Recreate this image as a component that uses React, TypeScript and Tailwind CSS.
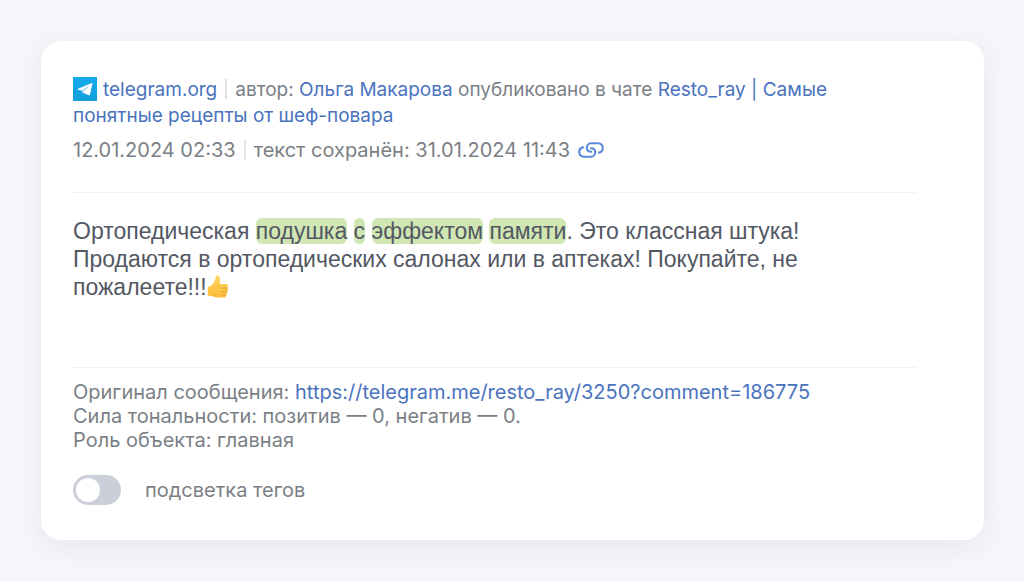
import { useState } from "react";
import type { ReactNode } from "react";

const POST_URL = "https://telegram.me/resto_ray/3250?comment=186775";

function TelegramIcon() {
  return (
    <svg viewBox="0 0 24 24" className="mr-1.5 inline-block size-6 align-[-5px]" aria-hidden="true">
      <defs>
        <linearGradient id="telegram-bg" x1="0" y1="0" x2="0" y2="1">
          <stop offset="0" stopColor="#14aae9" />
          <stop offset="1" stopColor="#149fdd" />
        </linearGradient>
      </defs>
      <rect width="24" height="24" fill="url(#telegram-bg)" />
      <path d="M18.7 6 5.1 11.7c-.6.3-.6.8 0 1l3.7.9L16 8.9 11 14l-.3 2 4.9 2.2c.7.3 1.2.1 1.4-.6L19.4 6.8c.1-.7-.2-1-.7-.8Z" fill="#fff" />
      <path d="M8.8 13.6 16 8.9 11 14 10.2 17.3Z" fill="#c5e5f5" />
    </svg>
  );
}

function ChainIcon() {
  return (
    <svg viewBox="0 0 26 16" className="h-4 w-[26px]" fill="none" stroke="#5b8bd9" strokeWidth="2.1" strokeLinecap="round" aria-hidden="true">
      <path d="M5 5.4A4.7 4.7 0 0 0 5.8 14.7H13A4.4 4.4 0 0 0 17.2 10.2C17.2 7.8 15.6 6.2 12.8 6.2" />
      <path d="M21 10.6A4.7 4.7 0 0 0 20.2 1.3H13A4.4 4.4 0 0 0 8.8 5.8C8.8 8.2 10.4 9.8 13.2 9.8" />
    </svg>
  );
}

function ThumbsUp() {
  return (
    <svg viewBox="0 0 22 23" className="inline-block h-[23px] w-[22px] align-[-3px]" role="img" aria-label="👍">
      <defs>
        <linearGradient id="thumb-skin" x1="0" y1="0" x2="0" y2="1">
          <stop offset="0" stopColor="#ffd862" />
          <stop offset="1" stopColor="#fbbb36" />
        </linearGradient>
      </defs>
      <path d="M.8 12.3c2.6-.8 4.6-2.4 6-4.7 1.1-1.8 1.5-3.7 1.8-5.6C8.8.7 9.8.3 10.9.7c2 .8 2.6 2.7 2.3 4.9l-.7 3.5 6.4-.1c1.7 0 2.4 1 2.3 2.1-.1.8-.5 1.3-1.1 1.6.9.5 1.3 1.2 1.1 2.1-.1.8-.7 1.4-1.4 1.6.6.5.8 1.1.7 1.9-.2.9-.8 1.4-1.7 1.6.4.4.5.9.3 1.4-.3.9-1.3 1.2-2.5 1.2h-5.5c-2.7 0-4.5-1-6.5-1.5L.8 20.6Z" fill="url(#thumb-skin)" />
      <path d="M14.4 13h5.6M14.6 16.6h5M14.6 20h4.1M12.5 9.1c-1.1.8-1.7 1.8-1.8 3.1" fill="none" stroke="#e39a33" strokeWidth=".9" strokeLinecap="round" />
    </svg>
  );
}

function Tag({ children }: { children: ReactNode }) {
  return <mark className="rounded-md bg-[#d0e7b4] text-inherit">{children}</mark>;
}

function Divider() {
  return <span className="mx-2 inline-block h-5 w-0.5 bg-[#dfe2e9] align-[-3px]" />;
}

export default function App() {
  const [highlight, setHighlight] = useState(false);

  return (
    <main className="min-h-screen bg-[#f4f6fb] p-[41px] pr-10 font-['Inter','Noto_Sans',sans-serif] text-xl text-[#7b7f86]">
      <article className="rounded-[20px] bg-white pt-9 pr-[68px] pb-[35px] pl-8 shadow-[0_6px_24px_rgba(40,45,60,0.07)]">
        <header className="border-b border-[#f1f2f4] pb-[29px]">
          <p className="text-[19px] leading-[26px]">
            <TelegramIcon />
            <a href="https://telegram.org" className="text-[#4a73be]">telegram.org</a>
            <Divider />
            автор: <a href="#author" className="text-[#4a73be]">Ольга Макарова</a> опубликовано в чате{" "}
            <a href="#chat" className="text-[#4a73be]">Resto_ray | Самые понятные рецепты от шеф-повара</a>
          </p>
          <div className="mt-2 flex items-center leading-[26px]">
            <time>12.01.2024 02:33</time>
            <span className="mx-2 h-5 w-0.5 bg-[#dfe2e9]" />
            <span>текст сохранён: 31.01.2024 11:43</span>
            <a href={POST_URL} aria-label="Ссылка" className="ml-2">
              <ChainIcon />
            </a>
          </div>
        </header>

        <p className="mt-6 min-h-[150px] font-['Liberation_Sans',Arial,sans-serif] text-[23px] leading-7 text-[#535863]">
          Ортопедическая <Tag>подушка</Tag> <Tag>с</Tag> <Tag>эффектом</Tag> <Tag>памяти</Tag>. Это классная штука! Продаются в ортопедических салонах или в аптеках! Покупайте, не пожалеете!!!
          <ThumbsUp />
        </p>

        <footer className="border-t border-[#f1f2f4] pt-3">
          <div className="leading-6">
            <p>
              Оригинал сообщения: <a href={POST_URL} className="text-[#4a73be]">{POST_URL}</a>
            </p>
            <p>Сила тональности: позитив — 0, негатив — 0.</p>
            <p>Роль объекта: главная</p>
          </div>
          <label className="mt-[23px] flex w-fit cursor-pointer items-center gap-6 leading-[30px]">
            <input
              type="checkbox"
              role="switch"
              checked={highlight}
              onChange={(e) => setHighlight(e.target.checked)}
              className="h-[30px] w-12 appearance-none rounded-full bg-[#cbcfd9] p-[3px] transition before:block before:size-6 before:rounded-full before:bg-white before:transition checked:bg-[#5b8bd9] checked:before:translate-x-[18px]"
            />
            <span>подсветка тегов</span>
          </label>
        </footer>
      </article>
    </main>
  );
}
